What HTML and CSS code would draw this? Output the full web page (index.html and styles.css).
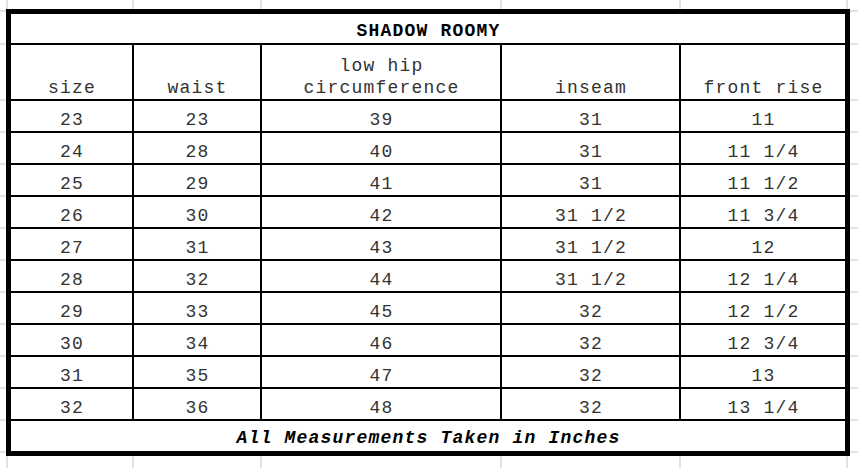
FILE: index.html
```html
<!DOCTYPE html>
<html lang="en">
<head>
<meta charset="utf-8">
<title>Shadow Roomy size chart</title>
<link rel="stylesheet" href="styles.css">
</head>
<body>
<div class="sheet">
  <div class="chart">
    <div class="cell title">SHADOW ROOMY</div>

    <div class="cell head">size</div>
    <div class="cell head">waist</div>
    <div class="cell head">low hip<br>circumference</div>
    <div class="cell head">inseam</div>
    <div class="cell head">front rise</div>

    <div class="cell">23</div><div class="cell">23</div><div class="cell">39</div><div class="cell">31</div><div class="cell">11</div>
    <div class="cell">24</div><div class="cell">28</div><div class="cell">40</div><div class="cell">31</div><div class="cell">11 1/4</div>
    <div class="cell">25</div><div class="cell">29</div><div class="cell">41</div><div class="cell">31</div><div class="cell">11 1/2</div>
    <div class="cell">26</div><div class="cell">30</div><div class="cell">42</div><div class="cell">31 1/2</div><div class="cell">11 3/4</div>
    <div class="cell">27</div><div class="cell">31</div><div class="cell">43</div><div class="cell">31 1/2</div><div class="cell">12</div>
    <div class="cell">28</div><div class="cell">32</div><div class="cell">44</div><div class="cell">31 1/2</div><div class="cell">12 1/4</div>
    <div class="cell">29</div><div class="cell">33</div><div class="cell">45</div><div class="cell">32</div><div class="cell">12 1/2</div>
    <div class="cell">30</div><div class="cell">34</div><div class="cell">46</div><div class="cell">32</div><div class="cell">12 3/4</div>
    <div class="cell">31</div><div class="cell">35</div><div class="cell">47</div><div class="cell">32</div><div class="cell">13</div>
    <div class="cell">32</div><div class="cell">36</div><div class="cell">48</div><div class="cell">32</div><div class="cell">13 1/4</div>

    <div class="cell foot">All Measurements Taken in Inches</div>
  </div>
</div>
</body>
</html>
```

FILE: styles.css
```css
html, body {
  margin: 0;
  padding: 0;
  background: #ffffff;
}

.sheet {
  width: 858px;
  height: 468px;
  box-sizing: border-box;
  padding: 9px 0 0 6px;
  overflow: hidden;
  background-color: #ffffff;
  background-image:
    linear-gradient(to right,
      transparent 0 6px, #e2e2e2 6px 8px,
      transparent 8px 132px, #e2e2e2 132px 134px,
      transparent 134px 260px, #e2e2e2 260px 262px,
      transparent 262px 500px, #e2e2e2 500px 502px,
      transparent 502px 679px, #e2e2e2 679px 681px,
      transparent 681px 846px, #e2e2e2 846px 848px,
      transparent 848px),
    linear-gradient(to bottom,
      transparent 0 10px, #e2e2e2 10px 12px,
      transparent 12px 43px, #e2e2e2 43px 45px,
      transparent 45px 99px, #e2e2e2 99px 101px,
      transparent 101px 131px, #e2e2e2 131px 133px,
      transparent 133px 163px, #e2e2e2 163px 165px,
      transparent 165px 195px, #e2e2e2 195px 197px,
      transparent 197px 227px, #e2e2e2 227px 229px,
      transparent 229px 259px, #e2e2e2 259px 261px,
      transparent 261px 291px, #e2e2e2 291px 293px,
      transparent 293px 323px, #e2e2e2 323px 325px,
      transparent 325px 355px, #e2e2e2 355px 357px,
      transparent 357px 387px, #e2e2e2 387px 389px,
      transparent 389px 419px, #e2e2e2 419px 421px,
      transparent 421px 451px, #e2e2e2 451px 453px,
      transparent 453px);
}

.chart {
  display: grid;
  grid-template-columns: 121px 126px 238px 177px 164px;
  grid-template-rows: 29px 54px repeat(10, 30px) 30px;
  gap: 2px;
  width: 834px;
  border: 5px solid #000;
  background: #000;
  font-family: "Liberation Mono", "Courier New", monospace;
  font-size: 18px;
  letter-spacing: 1.2px;
  color: #333;
}

.cell {
  background: #fff;
  display: flex;
  align-items: flex-end;
  justify-content: center;
  text-align: center;
  line-height: 20px;
  padding-left: 1px;
  padding-bottom: 1px;
  white-space: nowrap;
}

.head {
  line-height: 22px;
  padding-bottom: 0;
}

.title {
  grid-column: 1 / -1;
  font-weight: bold;
  padding-bottom: 2px;
  color: #000;
}

.foot {
  grid-column: 1 / -1;
  font-weight: bold;
  font-style: italic;
  padding-bottom: 3px;
  color: #000;
}
```
